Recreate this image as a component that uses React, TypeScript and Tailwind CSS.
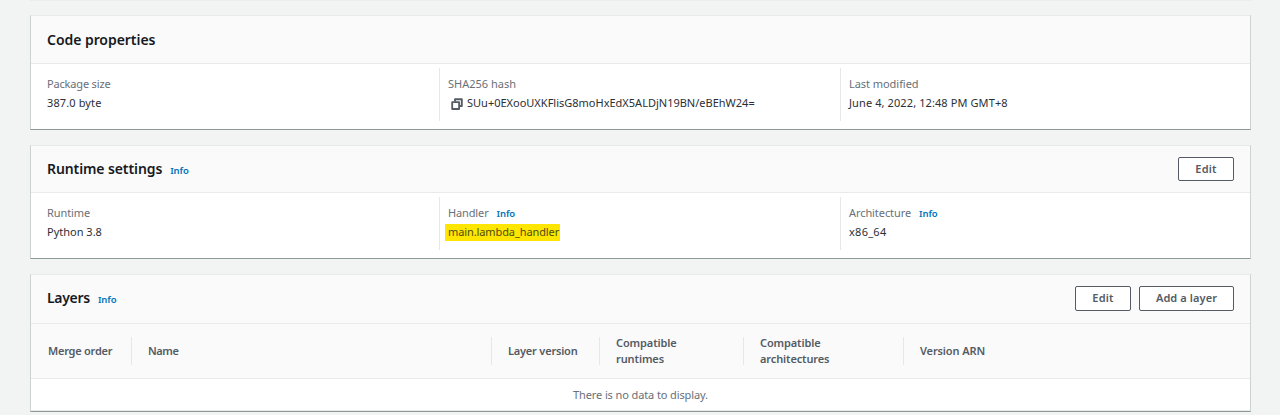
import React from 'react';

const INFO = 'Info';

function Info({ className = '' }: { className?: string }) {
  return (
    <a href="#" className={`text-[9.5px] font-semibold tracking-[-0.1px] text-[#0073bb] ${className}`}>
      {INFO}
    </a>
  );
}

function Button({ children, className }: { children: React.ReactNode; className: string }) {
  return (
    <button
      type="button"
      className={`flex items-center justify-center rounded-[2px] border border-[#545b64] bg-white pb-px text-[11px] leading-4 font-semibold text-[#545b64] ${className}`}
    >
      {children}
    </button>
  );
}

function Card({ children, className }: { children: React.ReactNode; className: string }) {
  return (
    <section
      className={`flex flex-col border border-t-[#e7eaea] border-r-[#ccd3d3] border-b-[#8d9999] border-l-[#ccd1d1] bg-white ${className}`}
    >
      {children}
    </section>
  );
}

function CardHeader({
  title,
  info,
  actions,
  className,
  titleClass = 'tracking-[-0.1px]',
}: {
  title: string;
  info?: boolean;
  actions?: React.ReactNode;
  className: string;
  titleClass?: string;
}) {
  return (
    <header className={`flex shrink-0 justify-between border-b border-[#e9ebeb] bg-[#fafafa] px-4 ${className}`}>
      <div className="flex items-baseline gap-2">
        <h2 className={`text-[14px] leading-5 font-semibold text-[#16191f] ${titleClass}`}>{title}</h2>
        {info && <Info />}
      </div>
      {actions}
    </header>
  );
}

function Field({
  label,
  info,
  labelClass,
  children,
  className = '',
}: {
  label: string;
  info?: boolean;
  labelClass: string;
  children: React.ReactNode;
  className?: string;
}) {
  return (
    <div className={`h-[53px] pt-[6px] text-[11px] leading-[19px] ${className}`}>
      <div className="flex h-[19px] items-baseline gap-2 text-[#687078]">
        <span className={labelClass}>{label}</span>
        {info && <Info />}
      </div>
      <div className="flex h-[19px] items-center text-[#2b2f36]">{children}</div>
    </div>
  );
}

function CopyIcon() {
  return (
    <svg width="12" height="12" viewBox="0 0 12 12" fill="none" stroke="#545b64" className="mt-[2px] mr-1 ml-[3px] shrink-0">
      <path d="M4 3.5V1.2H10.8V8H8.5" strokeWidth="1.9" strokeLinejoin="round" />
      <rect x="1.2" y="4.1" width="6.9" height="6.9" strokeWidth="1.8" fill="#fff" strokeLinejoin="round" />
    </svg>
  );
}

function HeadCell({ children, className }: { children: React.ReactNode; className: string }) {
  return <div className={`flex h-7 items-center border-[#e6e8e8] ${className}`}>{children}</div>;
}

const divided = 'border-l border-[#e6e8e8] pl-2';

export default function App() {
  return (
    <main className="flex h-[415px] flex-col overflow-hidden bg-[#f2f3f3] pr-[29px] pl-[30px] font-['Noto_Sans','Open_Sans',sans-serif]">
      <div className="mb-[14px] h-px shrink-0 bg-[#eaeded]" />

      <Card className="mb-[15px] h-[115px] shrink-0">
        <CardHeader title="Code properties" className="h-12 pt-[14px]" titleClass="tracking-[-0.05px]" />
        <div className="grid grid-cols-[408px_401px_1fr] pt-1">
          <Field label="Package size" labelClass="tracking-[-0.17px]" className="pl-4">
            <span className="tracking-[0.12px]">387.0 byte</span>
          </Field>
          <Field label="SHA256 hash" labelClass="" className={divided}>
            <CopyIcon />
            <span>SUu+0EXooUXKFlisG8moHxEdX5ALDjN19BN/eBEhW24=</span>
          </Field>
          <Field label="Last modified" labelClass="tracking-[-0.05px]" className={divided}>
            <span className="tracking-[0.1px]">June 4, 2022, 12:48 PM GMT+8</span>
          </Field>
        </div>
      </Card>

      <Card className="mb-[15px] h-[114px] shrink-0">
        <CardHeader
          title="Runtime settings"
          info
          className="h-[47px] pt-[13px]"
          actions={<Button className="-mt-[2px] h-6 w-14 tracking-[0.2px]">Edit</Button>}
        />
        <div className="grid grid-cols-[408px_401px_1fr] pt-1">
          <Field label="Runtime" labelClass="tracking-[-0.1px]" className="pl-4">
            <span>Python 3.8</span>
          </Field>
          <Field label="Handler" info labelClass="tracking-[-0.13px]" className={divided}>
            <span className="-ml-[3px] flex h-[17px] w-[115px] items-center self-end bg-[#ffe600] pb-[2px] pl-[3px] tracking-[-0.1px] text-[#4b4d10]">
              main.lambda_handler
            </span>
          </Field>
          <Field label="Architecture" info labelClass="tracking-[-0.08px]" className={divided}>
            <span className="tracking-[0.27px]">x86_64</span>
          </Field>
        </div>
      </Card>

      <Card className="h-[138px] shrink-0">
        <CardHeader
          title="Layers"
          info
          className="h-[49px] pt-[13px]"
          titleClass="tracking-[-0.3px]"
          actions={
            <div className="-mt-[2px] flex gap-2">
              <Button className="h-[25px] w-14 tracking-[0.2px]">Edit</Button>
              <Button className="h-[25px] w-[95px] tracking-[0.1px]">Add a layer</Button>
            </div>
          }
        />
        <div className="grid h-[55px] shrink-0 grid-cols-[100px_360px_108px_144px_160px_1fr] items-center border-b border-[#e9ebeb] bg-[#fafafa] text-[11px] leading-4 font-semibold text-[#545b64]">
          <HeadCell className="pl-[17px] tracking-[-0.24px]">Merge order</HeadCell>
          <HeadCell className="border-l pl-4 tracking-[-0.4px]">Name</HeadCell>
          <HeadCell className="border-l pl-4 tracking-[-0.2px]">Layer version</HeadCell>
          <HeadCell className="border-l pl-4 tracking-[-0.1px]">
            <span>
              Compatible
              <br />
              runtimes
            </span>
          </HeadCell>
          <HeadCell className="border-l pl-4 tracking-[-0.12px]">
            <span>
              Compatible
              <br />
              architectures
            </span>
          </HeadCell>
          <HeadCell className="border-l pl-4 tracking-[-0.12px]">Version ARN</HeadCell>
        </div>
        <div className="flex grow items-center justify-center border-b border-[#e9ebeb] text-[11px] leading-4 tracking-[-0.11px] text-[#687078]">
          There is no data to display.
        </div>
      </Card>
    </main>
  );
}
